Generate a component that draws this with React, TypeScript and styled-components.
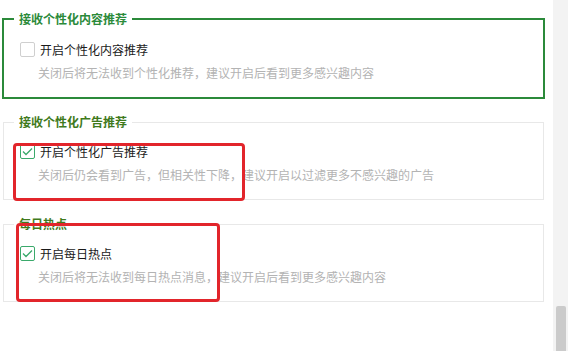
import * as React from 'react'
import styled, { createGlobalStyle } from 'styled-components'

const GlobalStyle = createGlobalStyle`
  html, body {
    margin: 0;
    padding: 0;
    background: #fff;
    font-family: "Noto Sans CJK SC", "Noto Sans", sans-serif;
  }
`

const Page = styled.div`
  display: flex;
  height: 351px;
  overflow: hidden;
`

const Main = styled.div`
  width: 553px;
  padding-top: 11px;
  box-sizing: border-box;
`

const Group = styled.fieldset<{ $active?: boolean }>`
  margin: ${p => (p.$active ? '0 8px 15px 2px' : '0 9px 16px 3px')};
  padding: ${p => (p.$active ? '14px 10px 16px 10px' : '13px 10px 16px 10px')};
  border: ${p => (p.$active ? '2px solid #2b8a3a' : '1px solid #e8e8e8')};
  min-inline-size: 0;
`

const Legend = styled.legend<{ $active?: boolean }>`
  padding: 0 5px;
  font-size: 12px;
  line-height: 16px;
  font-weight: 700;
  color: ${p => (p.$active ? '#2b8a3a' : '#3f7a1c')};
`

const Body = styled.div`
  position: relative;
  display: flex;
  flex-direction: column;
  gap: 8px;
`

const Row = styled.label`
  display: flex;
  align-items: center;
  gap: 5px;
  padding-left: 6px;
  height: 16px;
  font-size: 12px;
  color: #1a1a1a;
`

const Box = styled.span<{ $checked?: boolean }>`
  display: flex;
  align-items: center;
  justify-content: center;
  width: 15px;
  height: 15px;
  box-sizing: border-box;
  border: 1px solid ${p => (p.$checked ? '#3aa96b' : '#cfcfcf')};
  border-radius: 2px;
  background: #fff;
`

const Desc = styled.div`
  padding-left: 24px;
  font-size: 12px;
  line-height: 16px;
  color: #b3b3b3;
  white-space: nowrap;
`

const Mark = styled.div<{ $left: number; $top: number; $w: number; $h: number }>`
  position: absolute;
  left: ${p => p.$left}px;
  top: ${p => p.$top}px;
  width: ${p => p.$w}px;
  height: ${p => p.$h}px;
  box-sizing: border-box;
  border: 3px solid #e2252b;
  border-radius: 4px;
  pointer-events: none;
`

const Track = styled.div`
  width: 15px;
  height: 100%;
  background: #f3f3f3;
  display: flex;
  flex-direction: column;
  justify-content: flex-end;
  align-items: center;
`

const Thumb = styled.div`
  width: 10px;
  height: 45px;
  background: #cbcbcb;
  border-radius: 2px 2px 0 0;
`

const Check = ({ checked }: { checked?: boolean }) => (
  <Box $checked={checked}>
    {checked && (
      <svg width="11" height="9" viewBox="0 0 11 9">
        <polyline points="1,4.5 4,7.5 10,1.5" fill="none" stroke="#3aa96b" strokeWidth="1.3" />
      </svg>
    )}
  </Box>
)

interface Item {
  title: string
  label: string
  desc: string
  checked: boolean
  active?: boolean
  mark?: { left: number; top: number; w: number; h: number }
}

const items: Item[] = [
  {
    title: '接收个性化内容推荐',
    label: '开启个性化内容推荐',
    desc: '关闭后将无法收到个性化推荐，建议开启后看到更多感兴趣内容',
    checked: false,
    active: true,
  },
  {
    title: '接收个性化广告推荐',
    label: '开启个性化广告推荐',
    desc: '关闭后仍会看到广告，但相关性下降，建议开启以过滤更多不感兴趣的广告',
    checked: true,
    mark: { left: -1, top: 0, w: 232, h: 58 },
  },
  {
    title: '每日热点',
    label: '开启每日热点',
    desc: '关闭后将无法收到每日热点消息，建议开启后看到更多感兴趣内容',
    checked: true,
    mark: { left: 2, top: -22, w: 204, h: 79 },
  },
]

export default function App() {
  return (
    <Page>
      <GlobalStyle />
      <Main>
        {items.map(item => (
          <Group key={item.title} $active={item.active}>
            <Legend $active={item.active}>{item.title}</Legend>
            <Body>
              <Row>
                <Check checked={item.checked} />
                {item.label}
              </Row>
              <Desc>{item.desc}</Desc>
              {item.mark && (
                <Mark $left={item.mark.left} $top={item.mark.top} $w={item.mark.w} $h={item.mark.h} />
              )}
            </Body>
          </Group>
        ))}
      </Main>
      <Track>
        <Thumb />
      </Track>
    </Page>
  )
}
